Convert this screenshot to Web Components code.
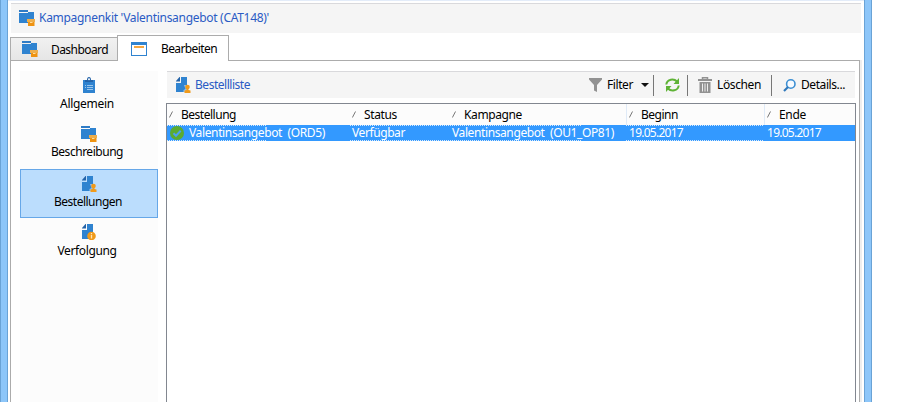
<!DOCTYPE html>
<html lang="de"><head><meta charset="utf-8"><title>Kampagnenkit</title>
<style>
html,body{margin:0;width:902px;height:402px;overflow:hidden;background:#fff;font:12px/16px "Noto Sans","Open Sans",sans-serif;color:#000}
</style></head><body>
<kit-window></kit-window>
<script>
const define=(name,css,html,init)=>customElements.define(name,class extends HTMLElement{
  constructor(){super();this.attachShadow({mode:'open'}).innerHTML=`<style>*{box-sizing:border-box}${css}</style>${html}`;}
  connectedCallback(){if(init)init(this);}
});

/* Label set to an exact width through its letter spacing. */
define('fit-label',':host{display:inline-block;white-space:pre;flex:none}span{display:inline-block}','<span></span>',el=>{
  const s=el.shadowRoot.querySelector('span'),t=el.getAttribute('text'),w=+el.getAttribute('w');
  s.textContent=t;el.style.width=w+'px';
  s.style.letterSpacing=((w-s.getBoundingClientRect().width)/t.length)+'px';
});

const doc='<path fill="#2f83d0" d="M5 0h6v15H0V6h5z"/><path fill="#2463a8" d="M3.500 0H4v4.500H0V4z"/>';
const icons={
 folder:[16,16,'<path fill="#2f7cc6" d="M0 0h9v2H0z"/><path fill="#2f83d0" d="M0 3h9V2h6v11H0z"/><path fill="#eeae4b" d="M8 9h8v3H8z"/><path fill="#ef9311" d="M9 12h6.500v4H9z"/><path fill="#ffdc9c" d="M11 12h2.500v1H11z"/>'],
 windowed:[16,14,'<path fill="#2f83d0" d="M0 0h16v14H0z"/><path fill="#fff" d="M1 3h14v10H1z"/><path fill="#f4a640" d="M3 4h10v2H3z"/>'],
 clip:[12,16,'<path fill="#2f83d0" d="M0 3h12v13H0z"/><path fill="#2463a8" d="M2 5V3h2Q4 0 6 0t2 3h2v2z"/><circle cx="6" cy="2.200" r="1" fill="#fff"/><path stroke="#b6d7f2" d="M2 8.500h1M4 8.500h6M2 10.500h1M4 10.500h6M4 12.500h6" stroke-width=".8"/>'],
 order:[15,16,doc+'<path fill="#fff" opacity=".5" d="M8 8h3v7H7.500v-2l2-1z"/><circle cx="11.500" cy="10" r="2.300" fill="#f09a1a"/><path fill="#f09a1a" d="M10.500 11h2v2l2 .5V16h-6v-2.500l2-.5z"/>'],
 track:[14,16,doc+'<circle cx="9.500" cy="12" r="4.300" fill="#f09a1a"/><path stroke="#ffe4b8" stroke-width="1.300" d="M9.500 9v1.300M9.500 11v3.500"/>'],
 filter:[13,14,'<path fill="#929292" d="M0 0h13v1.500L8 7v7L5 12.500V7L0 1.500z"/>'],
 refresh:[15,14,'<g fill="none" stroke="#5fb336" stroke-width="2"><path d="M1.300 6.500C2 .8 9 .3 12 3.500"/><path d="M13.700 7.500C13 13.200 6 13.700 3 10.500"/></g><path fill="#5fb336" d="M14 0v6H8.500zM1 14V8h5.500z"/>'],
 trash:[14,16,'<path fill="none" stroke="#929292" stroke-width="1.500" d="M4.500 2.500V.8h5v1.700"/><path fill="#929292" d="M0 2h14v2H0zM1.500 5h11v11h-11z"/><path stroke="#eee" d="M4.500 6.500v8M7 6.500v8M9.500 6.500v8"/>'],
 search:[13,13,'<circle cx="7.800" cy="5" r="4.200" fill="#f7fbff" stroke="#3d8fd3" stroke-width="1.600"/><path stroke="#2f78bb" stroke-width="2.200" d="M5 8L1 12"/>'],
 check:[14,14,'<circle cx="7" cy="7" r="7" fill="#5bab31"/><path fill="none" stroke="#4aa0f0" stroke-width="2" d="M3.500 7.200L6 9.800l4.700-5"/>'],
 slash:[4,7,'<path stroke="#777" d="M.4 6.500L3.500.5"/>'],
 caret:[8,4,'<path fill="#111" d="M0 0h8L4 4z"/>']
};
define('ui-icon',':host{display:block;flex:none}svg{display:block}','<div></div>',el=>{
  const [w,h,p]=icons[el.getAttribute('name')];
  el.shadowRoot.querySelector('div').innerHTML=`<svg width="${w}" height="${h}" viewBox="0 0 ${w} ${h}" fill="none">${p}</svg>`;
});

define('title-bar',':host{display:flex;height:30px;margin:0 3px;border-top:1px solid #d9d9dc;background:#f5f5f5;color:#2a5bc4;padding:6px 0 0 8px}fit-label{margin:0 0 0 4px}',
 `<ui-icon name="folder"></ui-icon><fit-label text="Kampagnenkit 'Valentinsangebot (CAT148)'" w="230"></fit-label>`);

define('tab-item',`:host{display:flex;width:108px;height:24px;margin-top:2px;border:1px solid #acacac;background:linear-gradient(#f1f1f1,#e6e6e6);padding:3px 0 0 11px}
:host([active]){width:112px;height:26px;margin:0 0 0 -1px;border-bottom:0;background:#fff;padding:6px 0 0 13px}
div{display:flex}
:host([active]) fit-label{margin:-1px 0 0 14px}fit-label{margin:1px 0 0 13px}`,'<div></div>',el=>{
  el.shadowRoot.querySelector('div').innerHTML=`<ui-icon name="${el.getAttribute('icon')}"></ui-icon><fit-label text="${el.getAttribute('label')}" w="${el.getAttribute('w')}"></fit-label>`;
});

define('nav-item',`:host{display:flex;flex-direction:column;align-items:center;height:49px;padding:6px 0 0;border:0}
:host([active]){background:#bbddfd;border:1px solid #66a7e8}.i{display:flex;height:16px}.t{margin-top:3px;padding-right:4px}
:host([active]) .t{margin-top:2px;padding-right:2px}:host([icon=track]) .i,:host([icon=folder]) .i{padding-right:1px}:host([icon=folder]) .t{margin-top:2px}`,'<div class="i"></div><div class="t"></div>',el=>{
  el.shadowRoot.querySelector('.i').innerHTML=`<ui-icon name="${el.getAttribute('icon')}"></ui-icon>`;
  el.shadowRoot.querySelector('.t').innerHTML=`<fit-label text="${el.getAttribute('label')}" w="${el.getAttribute('w')}"></fit-label>`;
});
define('side-nav',':host{display:block;width:138px;background:#fcfcfc;flex:none}',
 `<nav-item icon="clip" label="Allgemein" w="54"></nav-item><nav-item icon="folder" label="Beschreibung" w="72"></nav-item><nav-item active icon="order" label="Bestellungen" w="68"></nav-item><nav-item icon="track" label="Verfolgung" w="59"></nav-item>`);

define('list-toolbar',`:host{display:flex;height:27px;margin:0 0 5px 1px;width:688px;border-top:1px solid #d9d9dc;background:#f5f5f5;padding:0 0 0 9px}
fit-label{margin-top:5px}.head{color:#2a5bc4;margin-left:4px}.sep{width:1px;height:21px;margin-top:3px;background:#777}.gap{flex:none;width:339px}`,
 `<ui-icon name="order" style="margin-top:5px"></ui-icon><fit-label class="head" text="Bestellliste" w="55"></fit-label><span class="gap"></span>
<ui-icon name="filter" style="margin-top:6px"></ui-icon><fit-label text="Filter" w="26" style="margin-left:5px"></fit-label><ui-icon name="caret" style="margin:11px 0 0 8px"></ui-icon><span class="sep" style="margin-left:4px"></span>
<ui-icon name="refresh" style="margin:6px 0 0 11px"></ui-icon><span class="sep" style="margin-left:7px"></span>
<ui-icon name="trash" style="margin:5px 0 0 10px"></ui-icon><fit-label text="Löschen" w="44" style="margin-left:5px"></fit-label><span class="sep" style="margin-left:10px"></span>
<ui-icon name="search" style="margin:7px 0 0 11px"></ui-icon><fit-label text="Details..." w="44" style="margin-left:5px"></fit-label>`);

define('order-table',`:host{display:block;flex:1;width:690px;border:1px solid #828790;border-bottom:0;background:#fff}
.r{display:grid;grid-template-columns:183px 100px 176px 138px 91px}.h{height:21px;background:#fcfcfc}
.h div{display:flex;padding:3px 0 0 2px}.h ui-icon{margin-top:4px}.h fit-label{margin-left:8px}
.h .v{border-left:1px solid #dfeaf7}
.b{height:16px;background:#39f;color:#fff}.b div{display:flex;padding-left:2px}
.b .f{--d:repeating-linear-gradient(90deg,#d5eaff 0 1px,transparent 1px 2px);background:var(--d) 0 0/var(--fw,100%) 1px no-repeat,var(--d) 0 100%/var(--fw,100%) 1px no-repeat}
.b ui-icon{margin:1px 5px 0 1px}`,
 `<div class="r h"><div><ui-icon name="slash"></ui-icon><fit-label text="Bestellung" w="55"></fit-label></div><div><ui-icon name="slash"></ui-icon><fit-label text="Status" w="33"></fit-label></div><div><ui-icon name="slash"></ui-icon><fit-label text="Kampagne" w="58"></fit-label></div><div class="v"><ui-icon name="slash"></ui-icon><fit-label text="Beginn" w="37"></fit-label></div><div class="v"><ui-icon name="slash"></ui-icon><fit-label text="Ende" w="27"></fit-label></div></div>
<div class="r b"><div class="f" style="--fw:99px"><ui-icon name="check"></ui-icon><fit-label text="Valentinsangebot  (ORD5)" w="136"></fit-label></div><div class="f"><fit-label text="Verfügbar" w="53"></fit-label></div><div class="f" style="--fw:132px"><fit-label text="Valentinsangebot  (OU1_OP81)" w="162"></fit-label></div><div class="f" style="padding-left:3px"><fit-label text="19.05.2017" w="54"></fit-label></div><div style="padding-left:3px"><fit-label text="19.05.2017" w="54"></fit-label></div></div>`);

define('kit-window',`:host{display:flex;height:402px;width:872px}
.edge{width:8px;flex:none;background:#8dc6f9;border:1px solid #6aa3d6}.edge{border-top:0;border-bottom:0}
.main{flex:1;display:flex;flex-direction:column;border-top:1px solid #e3ecf9;padding-top:2px;min-width:0}
.tabs{display:flex;height:26px;margin:2px 0 -1px 2px;position:relative}
.page{flex:1;display:flex;margin:0 2px;border:1px solid #acacac;border-bottom:0;padding:10px 3px 0 9px;width:850px;box-shadow:2px 0 #eee}
.list{display:flex;flex-direction:column;margin-left:8px;width:690px}`,
 `<div class="edge"></div><div class="main"><title-bar></title-bar><div class="tabs"><tab-item icon="folder" label="Dashboard" w="57"></tab-item><tab-item active icon="windowed" label="Bearbeiten" w="56"></tab-item></div>
<div class="page"><side-nav></side-nav><div class="list"><list-toolbar></list-toolbar><order-table></order-table></div></div></div><div class="edge"></div>`);
</script></body></html>
